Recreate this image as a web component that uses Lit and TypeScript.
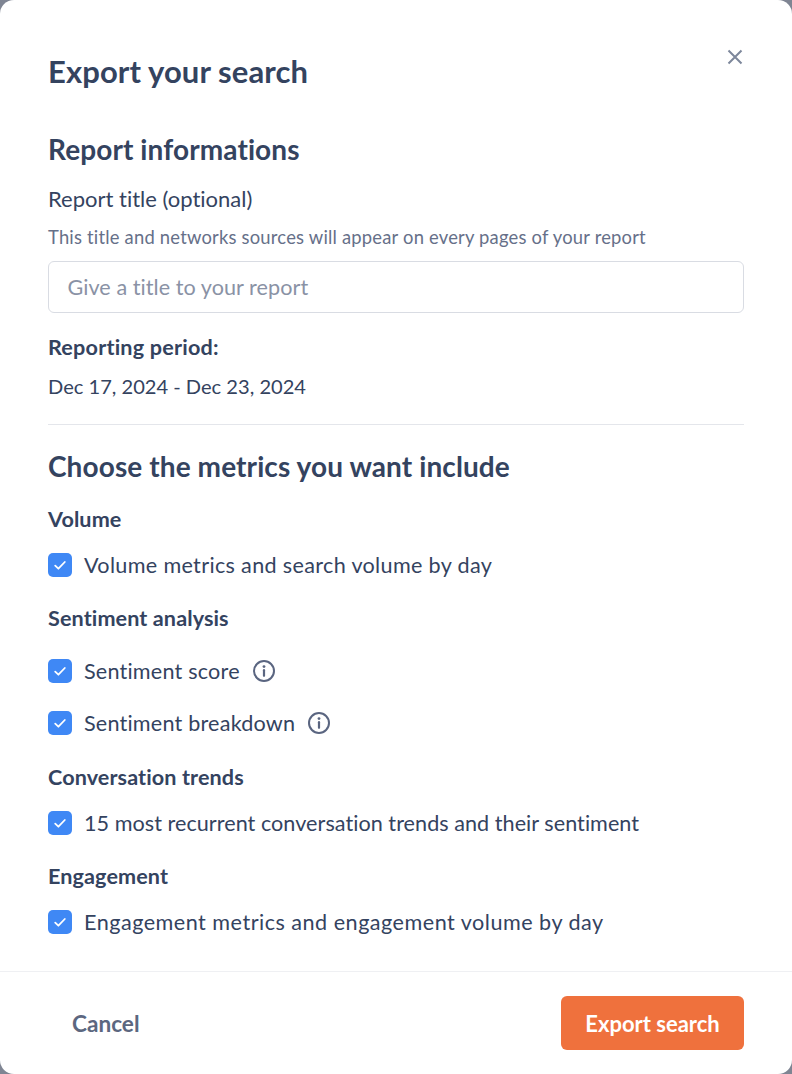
import { LitElement, html, css, nothing } from "lit";
import { customElement } from "lit/decorators.js";

const check = html`<span class="box"><svg width="24" height="24" viewBox="0 0 24 24" fill="none"><path d="M7.2 12.6 10.4 15.7 16.8 9" stroke="#fff" stroke-width="1.8" stroke-linecap="round" stroke-linejoin="round"/></svg></span>`;
const info = html`<svg class="info" width="24" height="24" viewBox="0 0 24 24" fill="none"><circle cx="12" cy="12" r="10" stroke="#5a6580" stroke-width="2"/><path d="M12 11.2v5.6" stroke="#5a6580" stroke-width="2.2" stroke-linecap="round"/><circle cx="12" cy="7.6" r="1.4" fill="#5a6580"/></svg>`;

@customElement("app-root")
export class AppRoot extends LitElement {
  static styles = css`
    :host { display: block; background: #7f8593; height: 1074px; font-family: Lato, "Noto Sans", sans-serif; color: #34435f; font-variant-ligatures: none; }
    .modal { position: relative; box-sizing: border-box; height: 1074px; background: #fff; border-radius: 14px; display: flex; flex-direction: column; }
    .body { flex: 1; padding: 53px 48px 0; display: flex; flex-direction: column; }
    h1 { margin: 0; font-size: 31px; line-height: 36px; font-weight: 700; letter-spacing: 0.1px; }
    h2 { margin: 0; font-size: 28px; line-height: 32px; font-weight: 700; letter-spacing: 0.1px; }
    .close { position: absolute; top: 49px; right: 49px; width: 16px; height: 16px; }
    .info-h { margin-top: 44px; }
    .label { margin-top: 21px; font-size: 22px; line-height: 26px; }
    .help { margin-top: 14px; font-size: 18.4px; line-height: 22px; color: #667089; letter-spacing: 0.2px; }
    .input { margin-top: 13px; box-sizing: border-box; height: 52px; border: 1px solid #d9dce3; border-radius: 6px; padding: 0 18.5px; display: flex; align-items: center; font-size: 21.6px; letter-spacing: 0.05px; color: #8a92a5; }
    .period { margin-top: 21px; font-size: 21.6px; line-height: 26px; font-weight: 700; letter-spacing: 0.2px; }
    .dates { margin-top: 13px; font-size: 20.1px; line-height: 26px; }
    hr { margin: 25px 0 0; border: 0; border-top: 1px solid #e4e6eb; }
    .metrics-h { margin-top: 25px; }
    .group { font-size: 21.6px; line-height: 26px; font-weight: 700; letter-spacing: 0.1px; }
    .row { display: flex; align-items: center; height: 24px; font-size: 21.6px; letter-spacing: 0.33px; }
    .row.short { letter-spacing: 0.2px; }
    .row.tight { letter-spacing: 0.04px; }
    .row.wide { letter-spacing: 0.49px; }
    .box { width: 24px; height: 24px; border-radius: 5px; background: #3f88f5; display: flex; align-items: center; justify-content: center; margin-right: 12px; flex: none; }
    .info { margin-left: 12px; flex: none; }
    .footer { box-sizing: border-box; height: 103px; border-top: 1px solid #eff0f3; padding: 24px 48px 0 72px; display: flex; justify-content: space-between; align-items: flex-start; }
    .cancel { line-height: 56px; font-size: 22.6px; font-weight: 700; color: #5c6780; }
    .export { width: 183px; height: 54px; border-radius: 6px; background: #ef713d; color: #fff; font-size: 22px; font-weight: 700; display: flex; align-items: center; justify-content: center; }
  `;

  private row(text: string, hasInfo = false, top = 0, cls = "") {
    return html`<div class="row ${cls}" style="margin-top:${top}px">${check}<span>${text}</span>${hasInfo ? info : nothing}</div>`;
  }

  render() {
    return html`<div class="modal">
      <svg class="close" viewBox="0 0 16 16" fill="none"><path d="M1.5 1.5 14.5 14.5M14.5 1.5 1.5 14.5" stroke="#7d879b" stroke-width="2"/></svg>
      <div class="body">
        <h1>Export your search</h1>
        <h2 class="info-h">Report informations</h2>
        <div class="label">Report title (optional)</div>
        <div class="help">This title and networks sources will appear on every pages of your report</div>
        <div class="input">Give a title to your report</div>
        <div class="period">Reporting period:</div>
        <div class="dates">Dec 17, 2024 - Dec 23, 2024</div>
        <hr />
        <h2 class="metrics-h">Choose the metrics you want include</h2>
        <div class="group" style="margin-top:24px">Volume</div>
        ${this.row("Volume metrics and search volume by day", false, 21)}
        <div class="group" style="margin-top:28px">Sentiment analysis</div>
        ${this.row("Sentiment score", true, 28, "short")}
        ${this.row("Sentiment breakdown", true, 28, "short")}
        <div class="group" style="margin-top:29px">Conversation trends</div>
        ${this.row("15 most recurrent conversation trends and their sentiment", false, 21, "tight")}
        <div class="group" style="margin-top:28px">Engagement</div>
        ${this.row("Engagement metrics and engagement volume by day", false, 21, "wide")}
      </div>
      <div class="footer"><span class="cancel">Cancel</span><span class="export">Export search</span></div>
    </div>`;
  }
}
